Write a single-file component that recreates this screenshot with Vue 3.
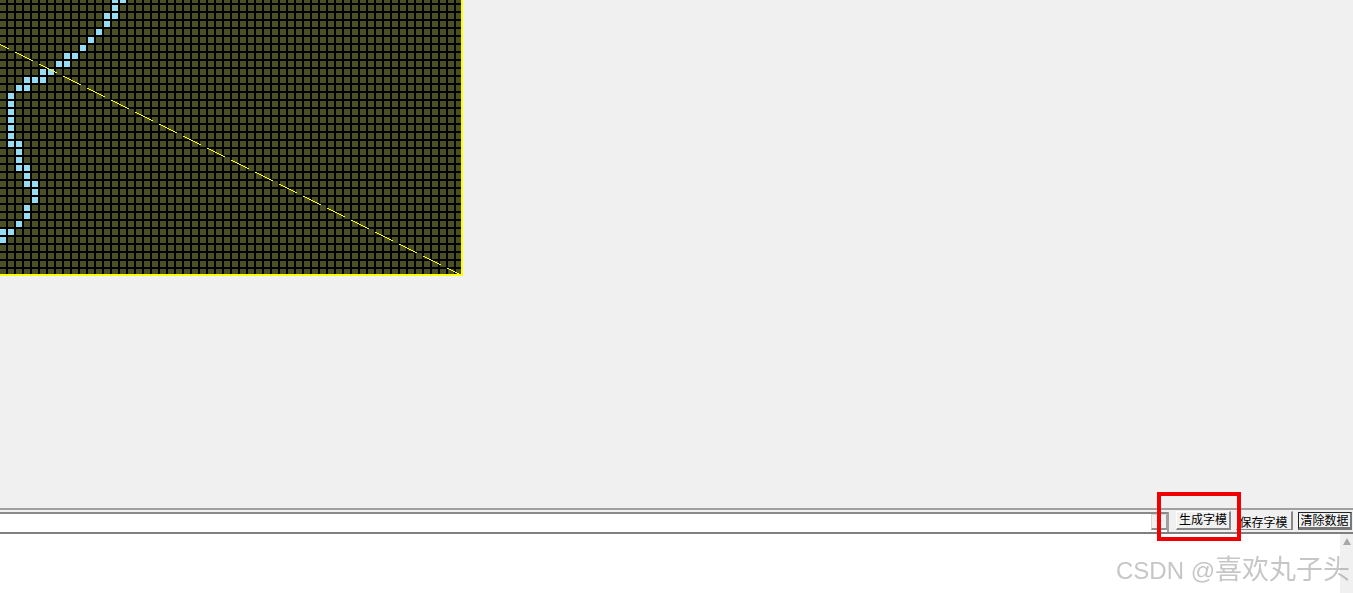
<script setup>
const cols = 58
const rows = 35
const blue = {
  0: [14, 15], 1: [14], 2: [13, 14], 3: [13], 4: [12], 5: [11], 6: [10], 7: [8, 9], 8: [7, 8],
  9: [5, 6], 10: [3, 4, 5], 11: [2, 3], 12: [1], 13: [1], 14: [1], 15: [1], 16: [1], 17: [1],
  18: [1, 2], 19: [2], 20: [2], 21: [2, 3], 22: [3], 23: [3, 4], 24: [4], 25: [4], 26: [3],
  27: [3], 28: [2], 29: [0, 1], 30: [0]
}
const cells = []
for (let r = 0; r < rows; r++) {
  for (let c = 0; c < cols; c++) {
    cells.push({ id: r * cols + c, x: c * 8, y: r * 8 - 3, on: (blue[r] || []).includes(c) })
  }
}
</script>

<template>
  <div class="window">
    <div class="canvas-area">
      <svg class="glyph" width="463" height="276" viewBox="0 0 463 276" shape-rendering="crispEdges">
        <rect width="463" height="276" fill="#000" />
        <rect
          v-for="cell in cells"
          :key="cell.id"
          :x="cell.x"
          :y="cell.y"
          width="6"
          height="6"
          :fill="cell.on ? '#99DDF5' : '#4B4F25'"
        />
        <line class="diag" x1="-9" y1="40" x2="463" y2="276" />
        <rect x="461" y="0" width="2" height="276" fill="#FFFF00" />
        <rect x="0" y="274" width="463" height="2" fill="#FFFF00" />
      </svg>
    </div>
    <div class="toolbar">
      <div class="combo">
        <input class="combo-input" type="text" />
        <span class="combo-arrow"><i class="tri"></i></span>
      </div>
      <button class="btn btn-gen">生成字模</button>
      <button class="btn btn-save">保存字模</button>
      <button class="btn btn-clear">清除数据</button>
      <div class="highlight"></div>
    </div>
    <div class="output">
      <div class="scrollbar"><span class="up"></span></div>
      <span class="watermark">CSDN @<span class="cjk">喜欢丸子头</span></span>
    </div>
  </div>
</template>

<style scoped>
.window {
  width: 1353px;
  height: 593px;
  background: #f0f0f0;
  display: flex;
  flex-direction: column;
  overflow: hidden;
  font-family: "Noto Sans CJK SC", "Liberation Sans", sans-serif;
}
.canvas-area {
  height: 508px;
  flex: none;
}
.glyph {
  display: block;
}
.diag {
  stroke: #ffff00;
  stroke-width: 1;
  stroke-dasharray: 20.1 6.73;
}
.toolbar {
  position: relative;
  z-index: 1;
  height: 26px;
  flex: none;
  box-sizing: border-box;
  border-top: 2px solid #a0a0a0;
  border-bottom: 2px solid #808080;
  display: flex;
  align-items: flex-start;
}
.combo {
  width: 1169px;
  flex: none;
  height: 20px;
  margin-top: 2px;
  background: #fff;
  position: relative;
  border-top: 2px solid #8a8a8a;
  border-right: 2px solid #a0a0a0;
  box-sizing: border-box;
}
.combo-input {
  display: block;
  width: 100%;
  height: 100%;
  border: 0;
  padding: 0;
  background: #fff;
}
.combo-arrow {
  position: absolute;
  right: 0;
  top: 0;
  width: 16px;
  height: 16px;
  box-sizing: border-box;
  background: #f0f0f0;
  border: 1px solid;
  border-color: #d8d8d8 #a0a0a0 #909090 #d8d8d8;
  border-bottom-width: 2px;
}
.tri {
  position: absolute;
  left: 4px;
  top: 5px;
  width: 0;
  height: 0;
  border-left: 3px solid transparent;
  border-right: 3px solid transparent;
  border-top: 3px solid #b8b8b8;
}
.btn {
  height: 19px;
  padding: 0 0 2px;
  flex: none;
  font: 12px/14px "Noto Sans CJK SC", sans-serif;
  color: #000;
  background: #f0f0f0;
  box-sizing: border-box;
  border: 1px solid;
  margin-top: 1px;
}
.btn-gen {
  width: 55px;
  margin-left: 7px;
  border-color: #fff #888 #888 #fff;
  border-width: 1px 2px 2px 1px;
}
.btn-save {
  width: 57px;
  margin-left: 5px;
  padding: 3px 0 0;
  border-color: #f0f0f0 #888 #888 #f0f0f0;
  border-width: 1px 2px 1px 0;
}
.btn-clear {
  width: 54px;
  margin-left: 5px;
  margin-top: 2px;
  height: 18px;
  padding: 0 0 2px;
  border-color: #222 #777 #777 #222;
  border-width: 1px 2px 3px 1px;
}
.highlight {
  position: absolute;
  left: 1157px;
  top: -18px;
  width: 84px;
  height: 49px;
  box-sizing: border-box;
  border: 4px solid #f00000;
}
.output {
  position: relative;
  flex: 1;
  background: #fff;
}
.scrollbar {
  position: absolute;
  right: 0;
  top: 0;
  bottom: 0;
  width: 13px;
  background: #f0f0f0;
}
.up {
  position: absolute;
  left: 3px;
  top: 4px;
  width: 0;
  height: 0;
  border-left: 4.5px solid transparent;
  border-right: 4.5px solid transparent;
  border-bottom: 7px solid #a8a8a8;
}
.watermark {
  position: absolute;
  right: 3px;
  top: 18px;
  font: 24px/32px "Liberation Sans", sans-serif;
  white-space: nowrap;
  color: rgba(120, 120, 120, 0.42);
  filter: blur(0.4px);
}
.cjk {
  font: 27px/32px "Noto Sans CJK SC", sans-serif;
}
</style>
